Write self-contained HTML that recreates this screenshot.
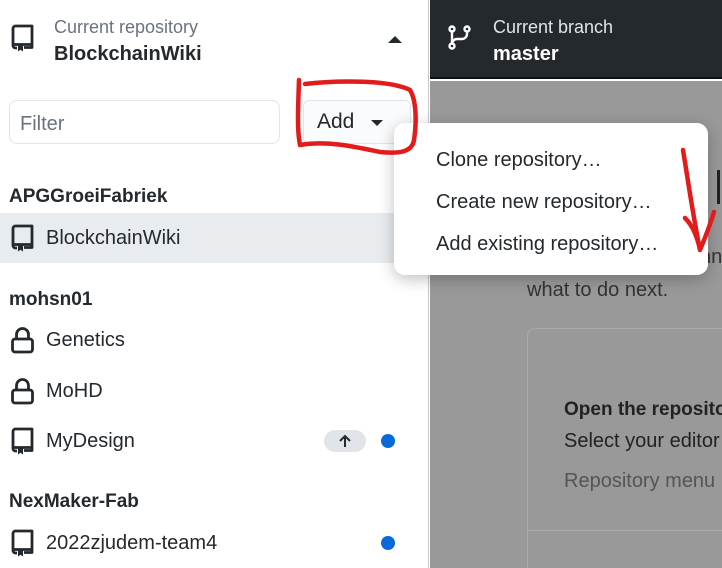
<!DOCTYPE html>
<html style="overflow:hidden"><head><meta charset="utf-8"><style>
*{margin:0;padding:0;box-sizing:border-box}
html,body{width:722px;height:568px;overflow:hidden}
body{font-family:"Liberation Sans",sans-serif;background:#fff;position:relative;color:#24292e}
.abs{position:absolute}
.left{left:0;top:0;width:429px;height:568px;background:#fff;border-right:1px solid #c8c8c8}
.item{position:absolute;left:0;width:429px;height:50px;font-size:20px;color:#24292e}
.item span{position:absolute;left:46px;top:14px}
.item svg{position:absolute;left:10px;top:11px}
.grp{position:absolute;left:9px;font-size:19px;font-weight:bold;color:#24292e}
.dot{position:absolute;left:381px;width:14px;height:14px;border-radius:50%;background:#0969da}
</style></head><body>
<svg width="0" height="0" style="position:absolute"><defs>
<g id="repo"><path d="M7 24 H5.5 a2.5 2.5 0 0 1 -2.5-2.5 V4.5 A2.5 2.5 0 0 1 5.5 2 H22 V23.5 H14 M3 20.5 H22" fill="none" stroke="#24292e" stroke-width="2.8" stroke-linejoin="round"/><path d="M8 20 h5 v7.5 l-2.5-1.8 L8 27.5z" fill="#24292e"/></g>
<g id="lock"><rect x="2.5" y="13" width="20" height="13" rx="2.5" fill="none" stroke="#24292e" stroke-width="2.8"/><path d="M6.5 13 V8.5 a6 6 0 0 1 12 0 V13" fill="none" stroke="#24292e" stroke-width="2.8"/></g>
</defs></svg>
<div class="abs left">
  <svg class="abs" style="left:10px;top:24px" width="25" height="29" viewBox="0 0 25 29"><use href="#repo"/></svg>
  <div class="abs" style="left:54px;top:17px;font-size:18px;color:#6a737d">Current repository</div>
  <div class="abs" style="left:54px;top:43px;font-size:20px;font-weight:bold">BlockchainWiki</div>
  <div class="abs" style="left:388px;top:36px;width:0;height:0;border-left:7px solid transparent;border-right:7px solid transparent;border-bottom:7px solid #24292e"></div>
  <div class="abs" style="left:9px;top:100px;width:271px;height:44px;border:1px solid #e1e4e8;border-radius:8px"></div>
  <div class="abs" style="left:20px;top:113px;font-size:20px;color:#6a737d">Filter</div>
  <div class="abs" style="left:303px;top:100px;width:108px;height:44px;border:1px solid #e1e4e8;border-radius:6px;background:#fafbfc"></div>
  <div class="abs" style="left:317px;top:110px;font-size:21px">Add</div>
  <div class="abs" style="left:371px;top:120px;width:0;height:0;border-left:6px solid transparent;border-right:6px solid transparent;border-top:6px solid #24292e"></div>
  <div class="grp" style="top:186px">APGGroeiFabriek</div>
  <div class="item" style="top:213px;background:#e9ecef"><svg width="25" height="29" viewBox="0 0 25 29"><use href="#repo"/></svg><span>BlockchainWiki</span></div>
  <div class="grp" style="top:289px">mohsn01</div>
  <div class="item" style="top:315px"><svg width="25" height="29" viewBox="0 0 25 29"><use href="#lock"/></svg><span>Genetics</span></div>
  <div class="item" style="top:366px"><svg width="25" height="29" viewBox="0 0 25 29"><use href="#lock"/></svg><span>MoHD</span></div>
  <div class="item" style="top:416px"><svg width="25" height="29" viewBox="0 0 25 29"><use href="#repo"/></svg><span>MyDesign</span>
    <div class="abs" style="left:324px;top:14px;width:42px;height:22px;border-radius:11px;background:#e1e4e8"></div>
    <svg style="left:337px;top:17px" width="16" height="16" viewBox="0 0 16 16"><path d="M8 14 V3 M3 8 L8 3 L13 8" fill="none" stroke="#24292e" stroke-width="2"/></svg>
    <div class="dot" style="top:18px"></div></div>
  <div class="grp" style="top:491px">NexMaker-Fab</div>
  <div class="item" style="top:518px"><svg width="25" height="29" viewBox="0 0 25 29"><use href="#repo"/></svg><span>2022zjudem-team4</span><div class="dot" style="top:18px"></div></div>
</div>
<div class="abs" style="left:430px;top:0;width:292px;height:79px;background:#24292e;border-bottom:2px solid #111"></div>
<svg class="abs" style="left:447px;top:25px" width="26" height="26" viewBox="0 0 26 26"><g fill="none" stroke="#fff" stroke-width="2.4"><circle cx="5" cy="4" r="2.5"/><circle cx="20" cy="4" r="2.5"/><circle cx="5" cy="21" r="2.5"/><path d="M5 7 V18 M20 7 v2 a5 5 0 0 1 -5 5 H10 a5 5 0 0 0 -5 5"/></g></svg>
<div class="abs" style="left:493px;top:17px;font-size:18px;color:#e1e4e8">Current branch</div>
<div class="abs" style="left:493px;top:43px;font-size:20px;font-weight:bold;color:#fff">master</div>
<div class="abs" style="left:430px;top:81px;width:292px;height:487px;background:#999"></div>
<div class="abs" style="left:717px;top:170px;width:3px;height:34px;background:#222"></div>
<div class="abs" style="left:700px;top:246px;font-size:20px;color:#333">nn</div>
<div class="abs" style="left:527px;top:279px;font-size:20px;color:#333">what to do next.</div>
<div class="abs" style="left:527px;top:328px;width:210px;height:250px;border:1px solid #aaa;border-radius:8px"></div>
<div class="abs" style="left:527px;top:530px;width:200px;height:1px;background:#aaa"></div>
<div class="abs" style="left:564px;top:399px;font-size:19px;font-weight:bold;color:#222;white-space:nowrap">Open the repository</div>
<div class="abs" style="left:564px;top:430px;font-size:20px;color:#222;white-space:nowrap">Select your editor</div>
<div class="abs" style="left:564px;top:470px;font-size:20px;color:#555;white-space:nowrap">Repository menu</div>
<div class="abs" style="left:394px;top:123px;width:314px;height:152px;background:#fff;border-radius:11px;box-shadow:0 4px 16px rgba(0,0,0,.25)"></div>
<div class="abs" style="left:436px;top:149px;font-size:20px;color:#24292e">Clone repository…</div>
<div class="abs" style="left:436px;top:191px;font-size:20px;color:#24292e">Create new repository…</div>
<div class="abs" style="left:436px;top:233px;font-size:20px;color:#24292e">Add existing repository…</div>
<svg class="abs" style="left:0;top:0" width="722" height="568" viewBox="0 0 722 568"><g fill="none" stroke="#e21b1b" stroke-width="4.5" stroke-linecap="round" stroke-linejoin="round"><path d="M299 80 C298 110 297 130 300 145 C330 140 360 148 380 152 C400 154 412 152 414 140 C417 120 416 100 410 90 C390 80 340 80 305 84"/><path d="M683 150 C688 180 692 210 700 250 M685 218 C692 225 697 235 700 250 C705 238 710 225 714 212"/></g></svg>
</body></html>
